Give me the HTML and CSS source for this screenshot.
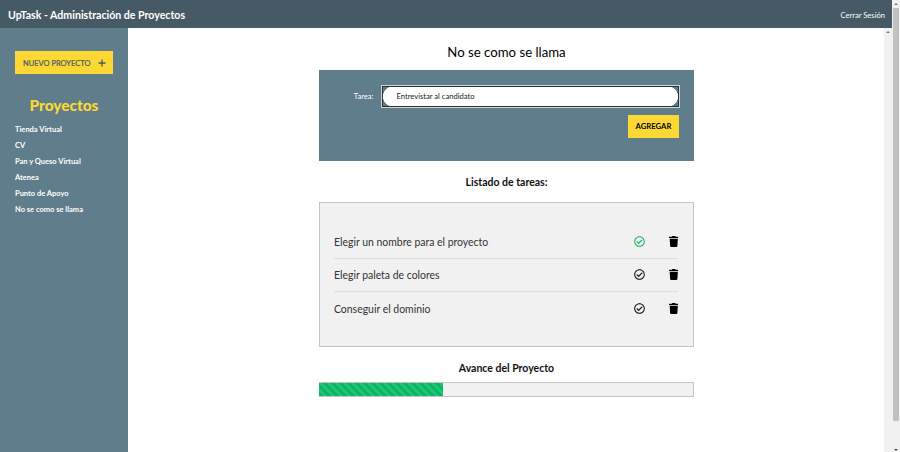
FILE: index.html
```html
<!DOCTYPE html>
<html lang="es">
<head>
<meta charset="utf-8">
<title>UpTask</title>
<link rel="stylesheet" href="styles.css">
</head>
<body>
<svg class="defs" width="0" height="0">
  <symbol id="check" viewBox="0 0 512 512"><path d="M256 8C119 8 8 119 8 256s111 248 248 248 248-111 248-248S393 8 256 8zm0 48c110.500 0 200 89.500 200 200s-89.500 200-200 200S56 366.500 56 256 145.500 56 256 56m140.200 130.300-22.500-22.700c-4.700-4.700-12.300-4.700-17-.1L215.300 303.700l-59.800-60.300c-4.700-4.700-12.300-4.700-17-.1l-22.700 22.500c-4.700 4.700-4.700 12.300-.1 17l90.800 91.500c4.700 4.700 12.300 4.700 17 .1l172.600-171.200c4.700-4.700 4.700-12.300.1-17z"/></symbol>
  <symbol id="trash" viewBox="0 0 448 512"><path d="M432 32H312l-9.400-18.700A24 24 0 0 0 281.100 0H166.800a24 24 0 0 0-21.400 13.300L136 32H16A16 16 0 0 0 0 48v32a16 16 0 0 0 16 16h416a16 16 0 0 0 16-16V48a16 16 0 0 0-16-16z"/><path d="M32 128l21.200 339a48 48 0 0 0 47.900 45h245.800a48 48 0 0 0 47.900-45L416 128z"/></symbol>
</svg>
<div class="window">
  <div class="page">
    <header class="topbar">
      <h1>UpTask - Administración de Proyectos</h1>
      <a class="logout">Cerrar Sesión</a>
    </header>
    <div class="body">
      <aside class="sidebar">
        <a class="new-project">Nuevo Proyecto
          <svg viewBox="0 0 8 8"><path d="M4 .5v7M.5 4h7"/></svg>
        </a>
        <h2>Proyectos</h2>
        <ul class="projects">
          <li>Tienda Virtual</li>
          <li>CV</li>
          <li>Pan y Queso Virtual</li>
          <li>Atenea</li>
          <li>Punto de Apoyo</li>
          <li>No se como se llama</li>
        </ul>
      </aside>
      <main class="content">
        <h1 class="project-name">No se como se llama</h1>
        <form class="task-form">
          <div class="field">
            <label for="task">Tarea:</label>
            <div class="focus"><input id="task" type="text" value="Entrevistar al candidato"></div>
          </div>
          <button type="button">Agregar</button>
        </form>
        <h2 class="list-title">Listado de tareas:</h2>
        <ul class="tasks">
          <li><p>Elegir un nombre para el proyecto</p><svg class="check done"><use href="#check"/></svg><svg class="trash"><use href="#trash"/></svg></li>
          <li><p>Elegir paleta de colores</p><svg class="check"><use href="#check"/></svg><svg class="trash"><use href="#trash"/></svg></li>
          <li><p>Conseguir el dominio</p><svg class="check"><use href="#check"/></svg><svg class="trash"><use href="#trash"/></svg></li>
        </ul>
        <h2 class="progress-title">Avance del Proyecto</h2>
        <div class="progress"><div class="bar" style="width:33.2%"></div></div>
      </main>
      <div class="scroll"><i class="up"></i></div>
    </div>
  </div>
  <div class="scroll outer"><i class="up"></i><div class="thumb"></div><i class="down"></i></div>
</div>
</body>
</html>
```
FILE: styles.css
```css
* { box-sizing: border-box; margin: 0; padding: 0; }
body { font-family: Lato, sans-serif; background: #fff; color: #111; overflow: hidden; }
ul { list-style: none; }
.defs { display: block; }
.window { display: flex; width: 900px; height: 452px; }
.page { flex: 1; display: flex; flex-direction: column; }
.topbar { height: 28px; background: #455a64; color: #fff; display: flex; align-items: center; justify-content: space-between; padding: 0 7px 0 8px; }
.topbar h1 { font-size: 10.6px; font-weight: 700; line-height: 16px; padding-top: 2px; }
.logout { font-size: 7.6px; line-height: 12px; padding-top: 2px; }
.body { flex: 1; display: flex; }
.sidebar { width: 128px; background: #607d8b; padding: 23px 15px 0; }
.new-project { display: flex; align-items: center; justify-content: space-between; height: 23px; background: #fdd835; color: #455a64; font-size: 7.5px; text-transform: uppercase; padding: 1px 7px 0 8px; white-space: nowrap; -webkit-text-stroke: .2px #455a64; }
.new-project svg { width: 8px; height: 8px; fill: none; stroke: #455a64; stroke-width: 1.3; }
.sidebar h2 { color: #fdd835; font-size: 15.4px; font-weight: 900; line-height: 20px; text-align: center; margin-top: 21px; }
.projects { margin-top: 7px; }
.projects li { height: 16px; line-height: 16px; font-size: 7.5px; font-weight: 700; color: #fff; }
.content { flex: 1; padding-left: 191px; }
.content > * { width: 375px; }
.project-name { font-size: 13.2px; font-weight: 400; line-height: 18px; text-align: center; margin-top: 15px; color: #000; }
.task-form { height: 91px; margin-top: 8.600px; padding: 15px 14px 0 0; background: #607d8b; display: flex; flex-direction: column; align-items: flex-end; }
.field { display: flex; align-items: center; gap: 7px; color: #fff; font-size: 7.6px; }
.focus { width: 299.500px; height: 23px; border: 1px solid #d8d6cf; background: #607d8b; }
.focus input { display: block; width: 100%; height: 21px; border: 1px solid #263238; border-radius: 0; font: 7.6px Lato, sans-serif; color: #222; padding: 0 14px; outline: 0; background: radial-gradient(circle at 10px 9.5px, #fff 9.8px, #607d8b 10.3px) 0 0 / 10px 19px no-repeat, radial-gradient(circle at 0 9.5px, #fff 9.8px, #607d8b 10.3px) 100% 0 / 10px 19px no-repeat, linear-gradient(#fff, #fff) 10px 0 / calc(100% - 20px) 19px no-repeat; }
.task-form button { width: 51px; height: 23px; border: 0; margin-top: 7px; margin-right: 1px; background: #fdd835; font: 700 7.7px Lato, sans-serif; text-transform: uppercase; color: #000; }
.list-title, .progress-title { font-size: 10.5px; font-weight: 700; line-height: 14px; text-align: center; }
.list-title { margin-top: 14.400px; }
.tasks { height: 145px; margin-top: 13px; padding: 22.400px 15px 0 14px; border: 1px solid #c4c4c4; background: #f1f1f1; }
.tasks li { display: flex; align-items: center; height: 33.300px; border-bottom: 1px solid #dedede; }
.tasks li:last-child { border-bottom: 0; }
.tasks p { flex: 1; font-size: 10.45px; line-height: 14px; padding-top: .4px; color: #333; }
.check { width: 11px; height: 11px; margin-right: 24px; fill: #111; }
.check.done { fill: #18b567; }
.trash { width: 9.500px; height: 11px; margin-left: -.5px; fill: #000; }
.progress-title { margin-top: 14px; }
.progress { height: 15px; margin-top: 7px; border: 1px solid #c4c4c4; background: #f1f1f1; }
.bar { height: 13px; margin-left: -1px; background: repeating-linear-gradient(45deg, #00b961 0 2.830px, #24c277 2.830px 5.660px); }
.scroll { width: 8px; background: #f1f1f1; display: flex; flex-direction: column; align-items: center; }
.up, .down { border: 2px solid transparent; }
.up { border-top: 0; border-bottom: 2px solid #777; margin-top: 3px; }
.down { border-bottom: 0; border-top: 2px solid #444; margin: auto 0 1px; }
.thumb { width: 6px; height: 413px; margin-top: 3px; background: #c1c1c1; }
```
